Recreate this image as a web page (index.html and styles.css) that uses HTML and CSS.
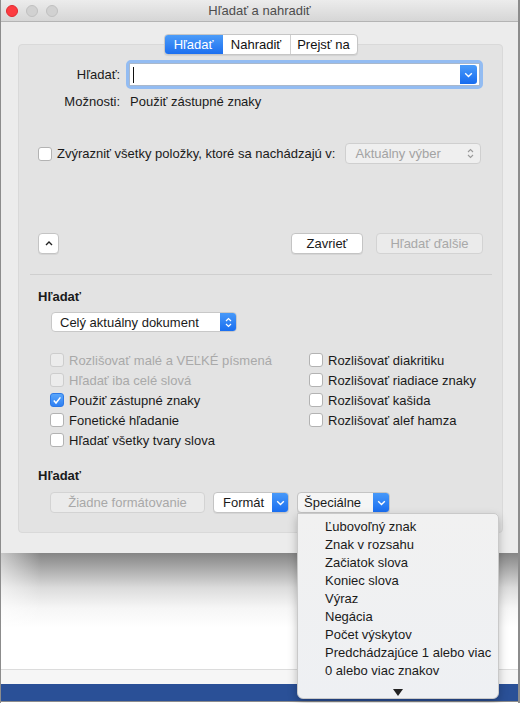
FILE: index.html
```html
<!DOCTYPE html>
<html lang="sk">
<head>
<meta charset="utf-8">
<title>Hľadať a nahradiť</title>
<link rel="stylesheet" href="styles.css">
</head>
<body>
<div class="screen">
  <div class="window">
    <div class="titlebar">
      <div class="lights"><span class="light red"></span><span class="light"></span><span class="light"></span></div>
      <div class="title">Hľadať a nahradiť</div>
      <div></div>
    </div>
    <div class="wbody">
      <div class="tabs"><span class="tab sel">Hľadať</span><span class="tab t2">Nahradiť</span><span class="tab t3">Prejsť na</span></div>
      <div class="panel">
        <div class="search-row">
          <span class="lbl">Hľadať:</span>
          <div class="ring">
            <div class="field">
              <span class="caret"></span>
              <span class="bluebtn combo"><svg width="9" height="6" viewBox="0 0 9 6"><path d="M1.2 1.2L4.5 4.4L7.8 1.2" stroke="#fff" stroke-width="1.4" fill="none"/></svg></span>
            </div>
          </div>
        </div>
        <div class="opt-row"><span class="lbl lbl2">Možnosti:</span><span class="optval">Použiť zástupné znaky</span></div>
        <div class="hl-row">
          <span class="cb"></span>
          <span class="hl-text">Zvýrazniť všetky položky, ktoré sa nachádzajú v:</span>
          <span class="popup disabled">Aktuálny výber<svg class="step" width="7" height="11" viewBox="0 0 7 11"><path d="M1 4L3.5 1.5L6 4M1 7L3.5 9.5L6 7" stroke="#9a9a9a" stroke-width="1.1" fill="none"/></svg></span>
        </div>
        <div class="btn-row">
          <span class="btn small"><svg width="8" height="5" viewBox="0 0 8 5"><path d="M1 4L4 1L7 4" stroke="#222" stroke-width="1.4" fill="none"/></svg></span>
          <span class="btn close">Zavrieť</span>
          <span class="btn next disabled">Hľadať ďalšie</span>
        </div>
        <div class="sep"></div>
        <div class="heading">Hľadať</div>
        <div class="popup scope">Celý aktuálny dokument<span class="bluebtn stepper"><svg width="7" height="11" viewBox="0 0 7 11"><path d="M1 4L3.5 1.5L6 4M1 7L3.5 9.5L6 7" stroke="#fff" stroke-width="1.2" fill="none"/></svg></span></div>
        <div class="grid">
          <label class="ck dis"><span class="cb"></span>Rozlišovať malé a VEĽKÉ písmená</label>
          <label class="ck"><span class="cb"></span>Rozlišovať diakritiku</label>
          <label class="ck dis"><span class="cb"></span>Hľadať iba celé slová</label>
          <label class="ck"><span class="cb"></span>Rozlišovať riadiace znaky</label>
          <label class="ck"><span class="cb on"><svg width="10" height="9" viewBox="0 0 10 9"><path d="M1.8 4.6L4 7L8.4 1.4" stroke="#fff" stroke-width="1.5" fill="none"/></svg></span>Použiť zástupné znaky</label>
          <label class="ck"><span class="cb"></span>Rozlišovať kašida</label>
          <label class="ck"><span class="cb"></span>Fonetické hľadanie</label>
          <label class="ck"><span class="cb"></span>Rozlišovať alef hamza</label>
          <label class="ck"><span class="cb"></span>Hľadať všetky tvary slova</label>
        </div>
        <div class="heading h2">Hľadať</div>
        <div class="fmt-row">
          <span class="btn nofmt disabled">Žiadne formátovanie</span>
          <span class="btn menu fmt">Formát<span class="bluebtn mb"><svg width="9" height="6" viewBox="0 0 9 6"><path d="M1.2 1.2L4.5 4.4L7.8 1.2" stroke="#fff" stroke-width="1.4" fill="none"/></svg></span></span>
          <span class="btn menu spec">Špeciálne<span class="bluebtn mb"><svg width="9" height="6" viewBox="0 0 9 6"><path d="M1.2 1.2L4.5 4.4L7.8 1.2" stroke="#fff" stroke-width="1.4" fill="none"/></svg></span></span>
        </div>
      </div>
    </div>
  </div>
  <div class="doc">
    <div class="shadow"></div>
    <div class="band"></div>
    <div class="ribbon"></div>
  </div>
  <div class="dropdown">
    <div class="item">Ľubovoľný znak</div>
    <div class="item">Znak v rozsahu</div>
    <div class="item">Začiatok slova</div>
    <div class="item">Koniec slova</div>
    <div class="item">Výraz</div>
    <div class="item">Negácia</div>
    <div class="item">Počet výskytov</div>
    <div class="item">Predchádzajúce 1 alebo viac</div>
    <div class="item">0 alebo viac znakov</div>
    <div class="more"><svg width="10" height="7" viewBox="0 0 10 7"><path d="M0 0H10L5 7Z" fill="#222"/></svg></div>
  </div>
</div>
</body>
</html>
```

FILE: styles.css
```css
* { box-sizing: border-box; }
html, body { margin: 0; padding: 0; background: #fff; }
body {
  font-family: "Liberation Sans", Arial, "Helvetica Neue", sans-serif;
  font-size: 13px;
  color: #1a1a1a;
}
.screen { position: relative; width: 520px; height: 703px; overflow: hidden; background: #fff; }

.window {
  width: 520px;
  border-left: 1px solid #8c8c8c;
  border-right: 2px solid #8c8c8c;
  background: #ececec;
}
.titlebar {
  height: 22px;
  display: grid;
  grid-template-columns: 1fr auto 1fr;
  align-items: center;
  background: linear-gradient(#ececec, #d6d6d6);
  border-bottom: 1px solid #b4b4b4;
}
.lights { display: flex; gap: 8px; padding-left: 5px; }
.light {
  width: 12px; height: 12px; border-radius: 50%;
  background: #d1d1d1; border: 1px solid #c0c0c0;
}
.light.red { background: #fc3c41; border-color: #e02a30; }
.title { color: #4d4d4d; font-size: 13px; line-height: 16px; }

.wbody { padding: 12px 15px 20px 17px; }
.tabs {
  position: relative; z-index: 1;
  display: flex; width: 194px; height: 21px; margin: 0 auto;
  border: 1px solid #c6c6c6; border-radius: 4px; background: #fff;
  overflow: hidden;
  box-shadow: 0 1px 1px rgba(0,0,0,0.08);
}
.tab { display: flex; align-items: center; justify-content: center; font-size: 13px; line-height: 16px; color: #111; }
.tab.sel { width: 58px; background: linear-gradient(#4c9cf8, #1c6ff0); color: #fff; }
.tab.t2 { width: 68px; border-right: 1px solid #d0d0d0; }
.tab.t3 { flex: 1; }

.panel {
  margin-top: -11px;
  height: 489px;
  background: #e3e3e3;
  border: 1px solid #d9d9d9;
  border-radius: 4px;
  padding: 15px 19px 0 19px;
}
.search-row { display: flex; align-items: center; height: 29px; margin-left: -19px; }
.lbl { width: 103px; text-align: right; line-height: 16px; }
.ring {
  margin-left: 6px;
  width: 363px; height: 29px;
  border: 3px solid #93bcf2;
  border-radius: 5px;
}
.field {
  height: 23px; background: #fff;
  border: 1px solid #a9b8cc;
  display: flex; align-items: center; justify-content: space-between;
  padding: 0 2px 0 3px;
}
.caret { width: 1px; height: 16px; background: #111; }
.bluebtn {
  display: flex; align-items: center; justify-content: center;
  background: linear-gradient(#4a9bf9, #176cf0);
}
.bluebtn.combo { width: 17px; height: 19px; border-radius: 0 3px 3px 0; }

.opt-row { display: flex; align-items: center; margin-top: 5px; margin-left: -19px; line-height: 16px; }
.lbl2 { width: 101px; }
.optval { margin-left: 10px; }

.hl-row { display: flex; align-items: center; height: 21px; margin-top: 33px; }
.cb {
  width: 14px; height: 14px; flex: none;
  background: #fff; border: 1px solid #b3b3b3; border-radius: 3px;
  display: flex; align-items: center; justify-content: center;
}
.cb.on { background: linear-gradient(#5aa6fa, #2f80f3); border-color: #2d79e6; }
.hl-text { margin-left: 5px; }
.popup {
  display: flex; align-items: center;
  height: 21px; border: 1px solid #cfcfcf; border-radius: 4px;
  background: #fff;
}
.popup.disabled {
  margin-left: 10px; width: 136px; color: #a3a3a3; background: #efefef;
  padding-left: 9px; justify-content: space-between; padding-right: 6px;
}

.btn-row { display: flex; align-items: center; height: 21px; margin-top: 69px; }
.btn {
  display: flex; align-items: center; justify-content: center;
  height: 21px; background: #fff; border: 1px solid #c4c4c4; border-radius: 4px;
  box-shadow: 0 1px 0 rgba(0,0,0,0.06);
}
.btn.small { width: 21px; }
.btn.close { width: 72px; margin-left: auto; }
.btn.next { width: 107px; margin-left: 13px; }
.btn.disabled { background: #ebebeb; color: #a8a8a8; border-color: #d3d3d3; box-shadow: none; }

.sep { height: 1px; background: #cfcfcf; margin: 20px -9px 0 -8px; }
.heading { font-weight: bold; line-height: 16px; margin-top: 14px; }
.popup.scope {
  margin-top: 7px; margin-left: 13px; width: 186px; height: 20px;
  padding-left: 8px; justify-content: space-between; border-color: #c8c8c8;
  overflow: hidden;
}
.bluebtn.stepper { width: 17px; height: 20px; margin-right: -1px; border-radius: 0 4px 4px 0; }

.grid {
  display: grid; grid-template-columns: 259px 1fr;
  grid-auto-rows: 20px; margin-top: 18px; margin-left: 12px;
}
.ck { display: flex; align-items: center; gap: 5px; }
.ck.dis { color: #a9a9a9; }
.ck.dis .cb { background: #ececec; border-color: #cdcdcd; }

.heading.h2 { margin-top: 18px; }
.fmt-row { display: flex; gap: 8px; margin-top: 8px; margin-left: 12px; }
.btn.nofmt { width: 155px; }
.btn.menu { justify-content: space-between; padding-left: 9px; overflow: hidden; }
.btn.fmt { width: 76px; }
.btn.spec { width: 93px; padding-left: 6px; background: #f5f5f5; }
.bluebtn.mb { width: 17px; height: 21px; margin-right: -1px; }

.doc { height: 150px; display: flex; flex-direction: column; border-left: 1px solid #8c8c8c; border-right: 2px solid #8c8c8c; }
.shadow {
  height: 116px;
  background:
    linear-gradient(to right, rgba(255,255,255,0.55), rgba(255,255,255,0) 40px),
    linear-gradient(#858585 0px, #a9a9a9 15px, #dcdcdc 35px, #f6f6f6 55px, #fff 75px);
}
.band { height: 15px; background: #f6f6f6; border-top: 1px solid #dcdcdc; }
.ribbon { height: 18px; background: #2a5097; border-bottom: 1px solid #8c8c8c; }

.dropdown {
  position: absolute; left: 297px; top: 513px;
  width: 202px; height: 186px;
  background: linear-gradient(#f1f1f1, #eef0f3);
  border: 1px solid #c9c9c9;
  border-radius: 0 0 6px 6px;
  border-top-right-radius: 5px;
  box-shadow: 0 4px 10px rgba(0,0,0,0.25);
  padding: 4px 0 0 27px;
}
.item { height: 18px; line-height: 18px; color: #1a1a1a; white-space: nowrap; }
.more { display: flex; justify-content: center; padding-right: 27px; margin-top: 9px; }
```
